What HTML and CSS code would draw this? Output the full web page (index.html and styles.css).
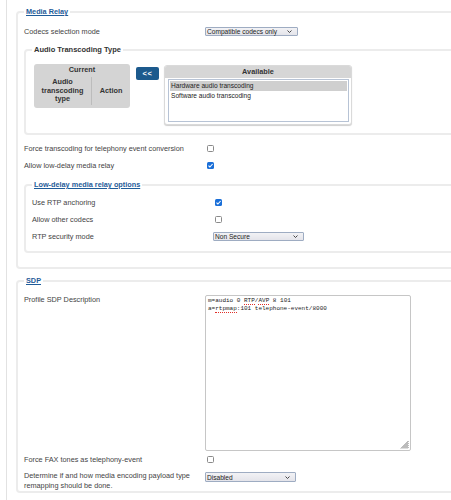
FILE: index.html
```html
<!DOCTYPE html>
<html lang="en">
<head>
  <meta charset="UTF-8">
  <meta name="viewport" content="width=device-width, initial-scale=1.0">
  <title>Media Relay</title>
  <link rel="stylesheet" href="styles.css">
</head>
<body>
  <div class="page">
    <fieldset class="group">
      <legend class="link">Media Relay</legend>
      <div class="row">
        <span class="label">Codecs selection mode</span>
        <div class="select w93">
          <span>Compatible codecs only</span>
          <svg class="chev" width="5" height="3" viewBox="0 0 5 3"><polyline points="0.5,0.5 2.5,2.5 4.5,0.5" fill="none" stroke="#333" stroke-width="0.9"/></svg>
        </div>
      </div>

      <fieldset class="sub">
        <legend class="plain">Audio Transcoding Type</legend>
        <div class="transcoding">
          <div class="current">
            <div class="current-head">Current</div>
            <div class="current-cols">
              <div class="col-type">Audio transcoding type</div>
              <div class="col-action">Action</div>
            </div>
          </div>
          <button class="move">&lt;&lt;</button>
          <div class="available">
            <div class="avail-head">Available</div>
            <div class="listbox">
              <div class="opt selected">Hardware audio transcoding</div>
              <div class="opt">Software audio transcoding</div>
            </div>
          </div>
        </div>
      </fieldset>

      <div class="row">
        <span class="label">Force transcoding for telephony event conversion</span>
        <span class="check"></span>
      </div>
      <div class="row">
        <span class="label">Allow low-delay media relay</span>
        <span class="check on">
          <svg width="7" height="7" viewBox="0 0 7 7"><path d="M1.5 3.6 L2.9 5 L5.6 2" fill="none" stroke="#fff" stroke-width="1.1"/></svg>
        </span>
      </div>

      <fieldset class="sub low">
        <legend class="link">Low-delay media relay options</legend>
        <div class="row">
          <span class="label">Use RTP anchoring</span>
          <span class="check on">
            <svg width="7" height="7" viewBox="0 0 7 7"><path d="M1.5 3.6 L2.9 5 L5.6 2" fill="none" stroke="#fff" stroke-width="1.1"/></svg>
          </span>
        </div>
        <div class="row">
          <span class="label">Allow other codecs</span>
          <span class="check"></span>
        </div>
        <div class="row">
          <span class="label">RTP security mode</span>
          <div class="select w91">
            <span>Non Secure</span>
            <svg class="chev" width="5" height="3" viewBox="0 0 5 3"><polyline points="0.5,0.5 2.5,2.5 4.5,0.5" fill="none" stroke="#333" stroke-width="0.9"/></svg>
          </div>
        </div>
      </fieldset>
    </fieldset>

    <fieldset class="group sdp">
      <legend class="link">SDP</legend>
      <div class="row top">
        <span class="label">Profile SDP Description</span>
        <div class="sdp-text">
          <div class="sdp-line">m=audio 0 <span class="spell">RTP</span>/<span class="spell">AVP</span> 8 101</div>
          <div class="sdp-line">a=<span class="spell">rtpmap</span>:101 telephone-event/8000</div>
          <svg class="grip" width="9" height="9" viewBox="0 0 9 9"><path d="M8.5 1 L1 8.5 M8.5 3 L3 8.5 M8.5 5 L5 8.5 M8.5 7 L7 8.5" stroke="#555" stroke-width="0.8"/></svg>
        </div>
      </div>
      <div class="row">
        <span class="label">Force FAX tones as telephony-event</span>
        <span class="check"></span>
      </div>
      <div class="row top remap">
        <span class="label">Determine if and how media encoding payload type remapping should be done.</span>
        <div class="select w91">
          <span>Disabled</span>
          <svg class="chev" width="5" height="3" viewBox="0 0 5 3"><polyline points="0.5,0.5 2.5,2.5 4.5,0.5" fill="none" stroke="#333" stroke-width="0.9"/></svg>
        </div>
      </div>
    </fieldset>
  </div>
</body>
</html>
```

FILE: styles.css
```css
html, body {
  margin: 0;
  padding: 0;
  overflow: hidden;
  background: #fff;
}
body {
  font-family: "Liberation Sans", Arial, sans-serif;
  font-size: 7.3px;
  color: #444;
}
.page {
  margin-left: 6px;
  border-left: 1px solid #e2e2e2;
  padding: 7px 0 0 9px;
  min-height: 500px;
  box-sizing: border-box;
}
fieldset {
  margin: 0;
  min-width: 0;
  border: 2px solid #ececec;
  border-radius: 4px;
}
legend {
  padding: 0 2px;
  font-weight: bold;
  font-size: 7.3px;
  line-height: 10px;
}
legend.link {
  color: #1f5c99;
  text-decoration: underline;
}
legend.plain {
  color: #333;
  font-size: 7.5px;
}
.group {
  margin-right: -40px;
  padding: 6px 0 14px 6px;
}
.group.sdp {
  margin-top: 7px;
  padding: 9px 0 0 6px;
}
.sub {
  margin: 5px 0 5px;
  padding: 9px 0 8px 6px;
}
.sub.low {
  margin: 6px 0 0;
  padding: 4px 0 6px 6px;
}
.row {
  display: grid;
  grid-template-columns: 181px auto;
  align-items: center;
  height: 17px;
}
.row.top {
  align-items: start;
  height: auto;
}
.row .label {
  padding-right: 6px;
}
.row.top .label {
  line-height: 9px;
}
.row.remap .label {
  line-height: 10px;
  padding-top: 3px;
}
.row.remap .select {
  margin-top: 4px;
  height: 10px;
}

/* selects */
.select {
  box-sizing: border-box;
  height: 9px;
  border: 1px solid #9eacc2;
  border-radius: 1px;
  background: linear-gradient(#f2f2f5, #e4e4ea);
  display: flex;
  align-items: center;
  justify-content: space-between;
  padding: 0 5px 0 1px;
  font-size: 6.6px;
  color: #222;
  line-height: 7px;
}
.w93 { width: 93px; }
.w91 { width: 91px; }

/* checkboxes */
.check {
  box-sizing: border-box;
  width: 7px;
  height: 7px;
  margin-left: 2px;
  border: 1px solid #8a8a8a;
  border-radius: 1.5px;
  background: #fff;
  display: flex;
}
.check.on {
  border: none;
  background: #1a6fd8;
}

/* audio transcoding */
.transcoding {
  display: flex;
  align-items: flex-start;
  margin-left: 2px;
}
.current {
  width: 96px;
  height: 44px;
  background: #d4d4d4;
  border-radius: 3px;
  color: #333;
  font-weight: bold;
  text-align: center;
}
.current-head {
  line-height: 12px;
}
.current-cols {
  display: grid;
  grid-template-columns: 57px 39px;
  align-items: center;
  height: 30px;
}
.col-type {
  line-height: 8.6px;
  padding: 0 4px;
}
.col-action {
  border-left: 1px solid #bcbcbc;
  height: 28px;
  line-height: 28px;
}
.move {
  margin: 3px 0 0 6px;
  width: 23px;
  height: 13px;
  padding: 0;
  border: none;
  border-radius: 2px;
  background: #1c5a8d;
  color: #fff;
  font-family: "Liberation Sans", Arial, sans-serif;
  font-weight: bold;
  font-size: 7.5px;
  letter-spacing: 0.5px;
}
.available {
  box-sizing: border-box;
  margin: 1px 0 0 5px;
  width: 188px;
  height: 60px;
  border: 1px solid #dadada;
  border-radius: 3px;
  background: #fff;
  box-shadow: 0 1px 1px #cfcfcf;
  overflow: hidden;
}
.avail-head {
  height: 12px;
  line-height: 12px;
  background: #d6d6d6;
  color: #333;
  font-weight: bold;
  text-align: center;
}
.listbox {
  box-sizing: border-box;
  margin: 1px 2px 0 3px;
  height: 43px;
  border: 1px solid #b7c3d5;
  padding: 1px 0 0 0;
  font-size: 6.6px;
  color: #222;
}
.opt {
  line-height: 10px;
  padding-left: 2px;
}
.opt.selected {
  background: #cfcfcf;
  margin: 0 1px;
  padding-left: 1px;
}

/* sdp textarea */
.sdp-text {
  position: relative;
  box-sizing: border-box;
  width: 206px;
  height: 156px;
  border: 1px solid #c6c6c6;
  border-radius: 2px;
  padding: 1px 2px;
  font-family: "Liberation Mono", "Courier New", monospace;
  font-size: 6px;
  color: #222;
}
.sdp-line {
  height: 8px;
  line-height: 8px;
  white-space: pre;
}
.spell {
  border-bottom: 1px dotted #e0302a;
}
.grip {
  position: absolute;
  right: 1px;
  bottom: 1px;
}
```
